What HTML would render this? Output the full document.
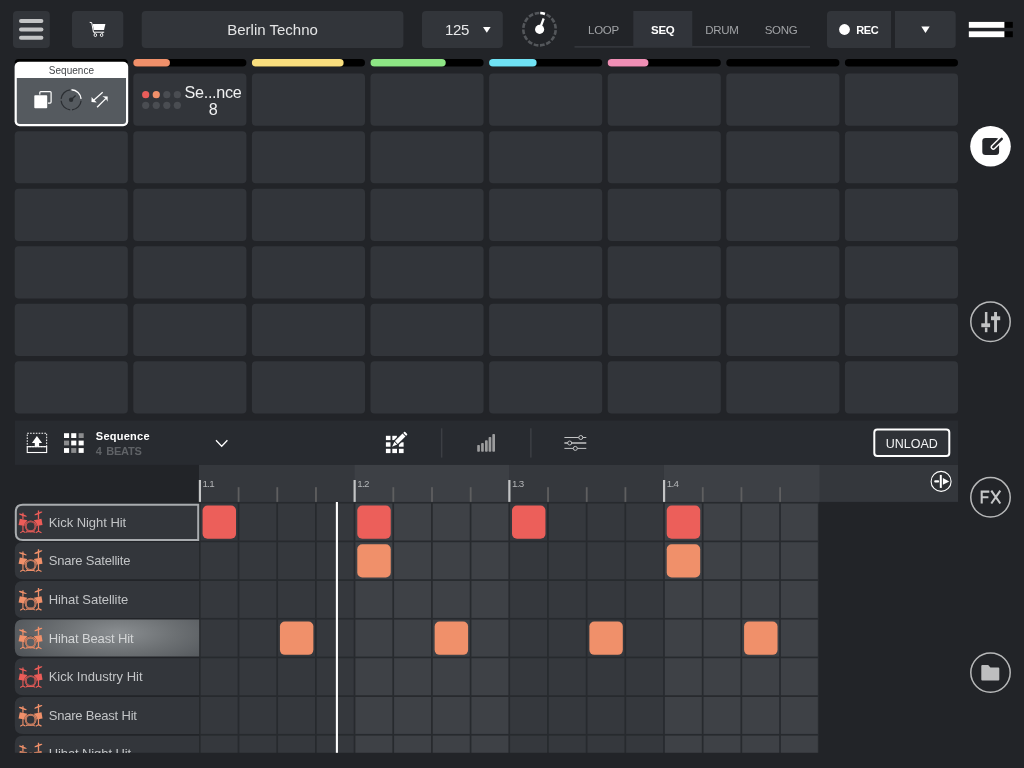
<!DOCTYPE html>
<html><head><meta charset="utf-8"><title>Berlin Techno</title>
<style>
*{box-sizing:border-box;margin:0;padding:0}
html,body{width:1024px;height:768px;overflow:hidden;background:#222428;font-family:"Liberation Sans",sans-serif}
body{position:relative}
#root{position:absolute;left:0;top:0;width:1024px;height:768px;will-change:transform}
#shapes{position:absolute;left:0;top:0}
.a{position:absolute;white-space:nowrap}
.tab{position:absolute;top:11px;height:36px;line-height:38.8px;font-size:11.5px;color:#a1a3a6;text-align:center;letter-spacing:-0.3px}
.rl{position:absolute;top:478.3px;font-size:9.8px;color:#b4b6b8;line-height:12px;letter-spacing:-0.7px}
#tn{position:absolute;left:0;top:502px;width:300px;height:250.8px;overflow:hidden}
.tn{position:absolute;left:48.7px;line-height:15px;font-size:13px;color:#c2c4c6;white-space:nowrap}
</style></head><body><div id="root">
<svg id="shapes" width="1024" height="768" viewBox="0 0 1024 768">
<rect x="13.00" y="11.00" width="36.80" height="37.00" rx="4" fill="#32353a"/>
<rect x="19.00" y="19.10" width="24.40" height="3.90" rx="1.95" fill="#c3c4c5"/>
<rect x="19.00" y="27.50" width="24.40" height="3.90" rx="1.95" fill="#c3c4c5"/>
<rect x="19.00" y="35.80" width="24.40" height="3.90" rx="1.95" fill="#c3c4c5"/>
<rect x="72.00" y="11.00" width="51.30" height="37.00" rx="4" fill="#32353a"/>
<g transform="translate(88 20)"><path d="M2.1 2.4 L3.7 2.6 L5.5 12.2 L15.8 12.2" fill="none" stroke="#fff" stroke-width="1" stroke-linecap="round" stroke-linejoin="round"/>
<path d="M4.7 4 L17.4 4 L16 10 L5.7 10 Z" fill="#fff"/>
<path d="M6.2 12.2 L6.8 13.8 M14.8 12.2 L14.2 13.8" stroke="#fff" stroke-width="0.8"/>
<ellipse cx="7.35" cy="15.1" rx="1.3" ry="1.45" fill="none" stroke="#fff" stroke-width="0.9"/>
<ellipse cx="13.6" cy="15.1" rx="1.3" ry="1.45" fill="none" stroke="#fff" stroke-width="0.9"/></g>
<rect x="141.70" y="11.00" width="261.70" height="37.00" rx="4" fill="#32353a"/>
<rect x="422.00" y="11.00" width="80.80" height="37.00" rx="4" fill="#32353a"/>
<g transform="translate(483 27)"><path d="M0 0 L7.6 0 L3.8 5.8 Z" fill="#fff"/></g>
<g transform="translate(519 9)"><circle cx="20.5" cy="20.2" r="16.2" fill="none" stroke="#54575b" stroke-width="2.6" stroke-dasharray="4.7 1.662" stroke-dashoffset="-0.83" transform="rotate(-90 20.5 20.2)"/>
<circle cx="20.5" cy="20.2" r="16.2" fill="none" stroke="#fff" stroke-width="2.6" stroke-dasharray="4.7 200" stroke-dashoffset="-0.83" transform="rotate(-90 20.5 20.2)"/>
<circle cx="20.6" cy="20.4" r="4.55" fill="#fff"/>
<path d="M20.6 20.4 L24.7 9.5" stroke="#fff" stroke-width="2.3"/></g>
<rect x="574.50" y="46.30" width="235.50" height="1.20" fill="#3b3e43"/>
<rect x="633.30" y="11.00" width="59.00" height="36.20" fill="#31343a"/>
<path d="M831 11 H891 V48 H831 Q827 48 827 44 V15 Q827 11 831 11 Z" fill="#32353a"/>
<circle cx="844.5" cy="29.5" r="5.4" fill="#fff"/>
<path d="M895 11 H951.7 Q955.7 11 955.7 15 V44 Q955.7 48 951.7 48 H895 Z" fill="#32353a"/>
<g transform="translate(921.3 26.5)"><path d="M0 0 L8.4 0 L4.2 6.4 Z" fill="#fff"/></g>
<rect x="968.80" y="21.90" width="44.00" height="5.90" fill="#000"/>
<rect x="968.80" y="21.90" width="35.60" height="5.90" fill="#fff"/>
<rect x="968.80" y="31.30" width="44.00" height="5.90" fill="#000"/>
<rect x="968.80" y="31.30" width="35.60" height="5.90" fill="#fff"/>
<rect x="14.70" y="58.90" width="113.10" height="7.50" rx="3.75" fill="#000"/>
<rect x="133.30" y="58.90" width="113.10" height="7.50" rx="3.75" fill="#000"/>
<rect x="133.30" y="58.90" width="36.60" height="7.50" rx="3.75" fill="#f0906a"/>
<rect x="251.90" y="58.90" width="113.10" height="7.50" rx="3.75" fill="#000"/>
<rect x="251.90" y="58.90" width="91.70" height="7.50" rx="3.75" fill="#fadf7e"/>
<rect x="370.50" y="58.90" width="113.10" height="7.50" rx="3.75" fill="#000"/>
<rect x="370.50" y="58.90" width="75.20" height="7.50" rx="3.75" fill="#8ee685"/>
<rect x="489.10" y="58.90" width="113.10" height="7.50" rx="3.75" fill="#000"/>
<rect x="489.10" y="58.90" width="47.50" height="7.50" rx="3.75" fill="#70e3f5"/>
<rect x="607.70" y="58.90" width="113.10" height="7.50" rx="3.75" fill="#000"/>
<rect x="607.70" y="58.90" width="40.70" height="7.50" rx="3.75" fill="#f08fb5"/>
<rect x="726.30" y="58.90" width="113.10" height="7.50" rx="3.75" fill="#000"/>
<rect x="844.90" y="58.90" width="113.10" height="7.50" rx="3.75" fill="#000"/>
<rect x="133.30" y="73.60" width="113.10" height="52.20" rx="4" fill="#32353a"/>
<rect x="251.90" y="73.60" width="113.10" height="52.20" rx="4" fill="#32353a"/>
<rect x="370.50" y="73.60" width="113.10" height="52.20" rx="4" fill="#32353a"/>
<rect x="489.10" y="73.60" width="113.10" height="52.20" rx="4" fill="#32353a"/>
<rect x="607.70" y="73.60" width="113.10" height="52.20" rx="4" fill="#32353a"/>
<rect x="726.30" y="73.60" width="113.10" height="52.20" rx="4" fill="#32353a"/>
<rect x="844.90" y="73.60" width="113.10" height="52.20" rx="4" fill="#32353a"/>
<rect x="14.70" y="131.15" width="113.10" height="52.20" rx="4" fill="#32353a"/>
<rect x="133.30" y="131.15" width="113.10" height="52.20" rx="4" fill="#32353a"/>
<rect x="251.90" y="131.15" width="113.10" height="52.20" rx="4" fill="#32353a"/>
<rect x="370.50" y="131.15" width="113.10" height="52.20" rx="4" fill="#32353a"/>
<rect x="489.10" y="131.15" width="113.10" height="52.20" rx="4" fill="#32353a"/>
<rect x="607.70" y="131.15" width="113.10" height="52.20" rx="4" fill="#32353a"/>
<rect x="726.30" y="131.15" width="113.10" height="52.20" rx="4" fill="#32353a"/>
<rect x="844.90" y="131.15" width="113.10" height="52.20" rx="4" fill="#32353a"/>
<rect x="14.70" y="188.70" width="113.10" height="52.20" rx="4" fill="#32353a"/>
<rect x="133.30" y="188.70" width="113.10" height="52.20" rx="4" fill="#32353a"/>
<rect x="251.90" y="188.70" width="113.10" height="52.20" rx="4" fill="#32353a"/>
<rect x="370.50" y="188.70" width="113.10" height="52.20" rx="4" fill="#32353a"/>
<rect x="489.10" y="188.70" width="113.10" height="52.20" rx="4" fill="#32353a"/>
<rect x="607.70" y="188.70" width="113.10" height="52.20" rx="4" fill="#32353a"/>
<rect x="726.30" y="188.70" width="113.10" height="52.20" rx="4" fill="#32353a"/>
<rect x="844.90" y="188.70" width="113.10" height="52.20" rx="4" fill="#32353a"/>
<rect x="14.70" y="246.25" width="113.10" height="52.20" rx="4" fill="#32353a"/>
<rect x="133.30" y="246.25" width="113.10" height="52.20" rx="4" fill="#32353a"/>
<rect x="251.90" y="246.25" width="113.10" height="52.20" rx="4" fill="#32353a"/>
<rect x="370.50" y="246.25" width="113.10" height="52.20" rx="4" fill="#32353a"/>
<rect x="489.10" y="246.25" width="113.10" height="52.20" rx="4" fill="#32353a"/>
<rect x="607.70" y="246.25" width="113.10" height="52.20" rx="4" fill="#32353a"/>
<rect x="726.30" y="246.25" width="113.10" height="52.20" rx="4" fill="#32353a"/>
<rect x="844.90" y="246.25" width="113.10" height="52.20" rx="4" fill="#32353a"/>
<rect x="14.70" y="303.80" width="113.10" height="52.20" rx="4" fill="#32353a"/>
<rect x="133.30" y="303.80" width="113.10" height="52.20" rx="4" fill="#32353a"/>
<rect x="251.90" y="303.80" width="113.10" height="52.20" rx="4" fill="#32353a"/>
<rect x="370.50" y="303.80" width="113.10" height="52.20" rx="4" fill="#32353a"/>
<rect x="489.10" y="303.80" width="113.10" height="52.20" rx="4" fill="#32353a"/>
<rect x="607.70" y="303.80" width="113.10" height="52.20" rx="4" fill="#32353a"/>
<rect x="726.30" y="303.80" width="113.10" height="52.20" rx="4" fill="#32353a"/>
<rect x="844.90" y="303.80" width="113.10" height="52.20" rx="4" fill="#32353a"/>
<rect x="14.70" y="361.35" width="113.10" height="52.20" rx="4" fill="#32353a"/>
<rect x="133.30" y="361.35" width="113.10" height="52.20" rx="4" fill="#32353a"/>
<rect x="251.90" y="361.35" width="113.10" height="52.20" rx="4" fill="#32353a"/>
<rect x="370.50" y="361.35" width="113.10" height="52.20" rx="4" fill="#32353a"/>
<rect x="489.10" y="361.35" width="113.10" height="52.20" rx="4" fill="#32353a"/>
<rect x="607.70" y="361.35" width="113.10" height="52.20" rx="4" fill="#32353a"/>
<rect x="726.30" y="361.35" width="113.10" height="52.20" rx="4" fill="#32353a"/>
<rect x="844.90" y="361.35" width="113.10" height="52.20" rx="4" fill="#32353a"/>
<rect x="14.60" y="61.70" width="113.60" height="64.60" rx="5" fill="#fff"/>
<path d="M16.8 78.1 H126 V121.1 Q126 124.1 123 124.1 H19.8 Q16.8 124.1 16.8 121.1 Z" fill="#555a5f"/>
<g transform="translate(30 86)"><rect x="9.8" y="5.6" width="11.3" height="11.5" rx="1" fill="none" stroke="#fff" stroke-width="1.2"/>
<rect x="3.6" y="8.6" width="14.3" height="14.2" fill="#555a5f"/>
<rect x="4.3" y="9.3" width="12.9" height="12.9" rx="0.8" fill="#fff"/>
<g fill="none" stroke-width="1.3">
<path d="M41.5 3.75 A10.05 10.05 0 0 1 51.1 12.9" stroke="#fff"/>
<path d="M51.1 14.7 A10.05 10.05 0 0 1 42 23.8" stroke="#2b2e32"/>
<path d="M40.2 23.8 A10.05 10.05 0 0 1 31.1 14.7" stroke="#2b2e32"/>
<path d="M31.1 12.9 A10.05 10.05 0 0 1 40.2 3.8" stroke="#2b2e32"/>
</g>
<circle cx="41.1" cy="13.8" r="2.2" fill="#2b2e32"/>
<path d="M41.1 13.8 L45.6 9.6" stroke="#2b2e32" stroke-width="1.3"/>
<path d="M72.7 6.3 L63.4 14.4" stroke="#fff" stroke-width="1.3" fill="none"/>
<path d="M61.5 16.1 L61.6 11 L63.3 13 L66.8 16.6 Z" fill="#fff"/>
<path d="M67.1 21.3 L76 12.4" stroke="#fff" stroke-width="1.3" fill="none"/>
<path d="M77.7 10.5 L72.4 10.2 L75.8 12.4 L77.6 15.8 Z" fill="#fff"/></g>
<circle cx="145.70" cy="94.7" r="3.6" fill="#e95d5a"/>
<circle cx="156.25" cy="94.7" r="3.6" fill="#f0906a"/>
<circle cx="166.80" cy="94.7" r="3.6" fill="#4a4d52"/>
<circle cx="177.35" cy="94.7" r="3.6" fill="#4a4d52"/>
<circle cx="145.70" cy="105.3" r="3.6" fill="#4a4d52"/>
<circle cx="156.25" cy="105.3" r="3.6" fill="#4a4d52"/>
<circle cx="166.80" cy="105.3" r="3.6" fill="#4a4d52"/>
<circle cx="177.35" cy="105.3" r="3.6" fill="#4a4d52"/>
<circle cx="990.5" cy="146.3" r="20.3" fill="#fff"/>
<g transform="translate(978 134)"><rect x="4.3" y="4.1" width="16.8" height="16.8" rx="3.2" fill="#25272b"/>
<path d="M15.3 13.2 L23.7 4.8" stroke="#fff" stroke-width="5.4" stroke-linecap="round"/>
<path d="M15.3 13.2 L23.7 4.8" stroke="#25272b" stroke-width="2.5" stroke-linecap="round"/></g>
<circle cx="990.5" cy="321.8" r="19.7" fill="none" stroke="#b7b8b9" stroke-width="1.5"/>
<circle cx="990.5" cy="497.3" r="19.7" fill="none" stroke="#b7b8b9" stroke-width="1.5"/>
<circle cx="990.5" cy="672.6" r="19.7" fill="none" stroke="#b7b8b9" stroke-width="1.5"/>
<g transform="translate(978 310)"><g fill="#c2c3c4"><rect x="6.9" y="2" width="2.5" height="13.6"/><rect x="6.9" y="17.6" width="2.5" height="4.6"/>
<rect x="3.3" y="13.3" width="8.8" height="3.9"/><rect x="16.1" y="2" width="2.9" height="20.2"/><rect x="13" y="6.3" width="9.2" height="3.9"/></g></g>
<g transform="translate(978 488)"><g fill="none" stroke="#c6c7c8" stroke-width="2.1">
<path d="M3.7 15.5 L3.7 2.6 M2.65 3.65 L11.3 3.65 M2.65 9.2 L10.4 9.2"/>
<path d="M13.3 2.6 L22.3 15.5 M22.3 2.6 L13.3 15.5"/></g></g>
<g transform="translate(980 663)"><path d="M1.3 3 Q1.3 2 2.3 2 L8.2 2 L10.4 4.6 L18.3 4.6 Q19.3 4.6 19.3 5.6 L19.3 16.5 Q19.3 17.5 18.3 17.5 L2.3 17.5 Q1.3 17.5 1.3 16.5 Z" fill="#bdbebf"/></g>
<rect x="15.00" y="420.60" width="943.00" height="44.30" fill="#282b30"/>
<g transform="translate(25 431)"><rect x="2.25" y="2.25" width="19.4" height="13.4" fill="none" stroke="#fff" stroke-width="1" stroke-dasharray="1.6 1.25"/>
<rect x="2.25" y="15.7" width="19.4" height="5.8" fill="none" stroke="#fff" stroke-width="1.1"/>
<path d="M11.9 4.9 L17.1 11.9 L14.1 11.9 L14.1 15.2 L9.8 15.2 L9.8 11.9 L6.9 11.9 Z" fill="#fff"/></g>
<rect x="64.00" y="433.20" width="5.10" height="4.80" fill="#fff"/>
<rect x="71.20" y="433.20" width="5.10" height="4.80" fill="#fff"/>
<rect x="78.60" y="433.20" width="5.10" height="4.80" fill="#8b8c8e"/>
<rect x="64.00" y="440.60" width="5.10" height="4.80" fill="#8b8c8e"/>
<rect x="71.20" y="440.60" width="5.10" height="4.80" fill="#fff"/>
<rect x="78.60" y="440.60" width="5.10" height="4.80" fill="#fff"/>
<rect x="64.00" y="448.10" width="5.10" height="4.80" fill="#fff"/>
<rect x="71.20" y="448.10" width="5.10" height="4.80" fill="#8b8c8e"/>
<rect x="78.60" y="448.10" width="5.10" height="4.80" fill="#fff"/>
<g transform="translate(214 438)"><path d="M2 2.2 L7.7 8.2 L13.4 2.2" fill="none" stroke="#fff" stroke-width="1.3"/></g>
<g transform="translate(384 431)"><g fill="#fff">
<rect x="1.9" y="4.8" width="4.6" height="4.3"/><rect x="8.3" y="4.8" width="4.6" height="4.3"/>
<rect x="1.9" y="11.3" width="4.6" height="4.4"/><rect x="14.9" y="11.3" width="4.7" height="4.4"/>
<rect x="1.9" y="17.8" width="4.6" height="4.3"/><rect x="8.3" y="17.8" width="4.7" height="4.3"/><rect x="14.9" y="17.8" width="4.7" height="4.3"/>
</g>
<g transform="translate(8.1 15.75) rotate(-44.5)">
<path d="M-0.6 0 L5.5 -2.5 L19.6 -2.5 L19.6 2.5 L5.5 2.5 Z" fill="#282b30" stroke="#282b30" stroke-width="1.7"/>
<path d="M0 0 L5.2 -2.05 L5.2 2.05 Z" fill="#fff"/>
<rect x="5.95" y="-2.05" width="10.7" height="4.1" fill="#fff"/>
<rect x="17.55" y="-2.2" width="2.1" height="4.4" rx="1" fill="#fff"/>
</g></g>
<rect x="440.90" y="428.30" width="1.50" height="29.30" fill="#3c3f44"/>
<rect x="530.10" y="428.30" width="1.50" height="29.30" fill="#3c3f44"/>
<rect x="477.20" y="445.00" width="2.70" height="6.70" rx="0.8" fill="#9b9c9d"/>
<rect x="481.10" y="443.10" width="2.70" height="8.60" rx="0.8" fill="#9b9c9d"/>
<rect x="485.00" y="440.30" width="2.70" height="11.40" rx="0.8" fill="#9b9c9d"/>
<rect x="488.60" y="436.90" width="2.70" height="14.80" rx="0.8" fill="#9b9c9d"/>
<rect x="492.30" y="434.10" width="2.70" height="17.60" rx="0.8" fill="#9b9c9d"/>
<g transform="translate(562 432)"><g stroke="#c3c4c5" fill="#282b30">
<path d="M2.4 5.5 L24.3 5.5" stroke-width="1"/><path d="M2.4 11 L24.3 11" stroke-width="1.5"/><path d="M2.4 16.4 L24.3 16.4" stroke-width="1"/>
<circle cx="18.8" cy="5.5" r="2" stroke-width="1"/><circle cx="7.7" cy="11" r="2" stroke-width="1"/><circle cx="13.3" cy="16.4" r="2" stroke-width="1"/>
</g></g>
<rect x="874.3" y="429.6" width="75" height="26.5" rx="3" fill="#2f3237" stroke="#fff" stroke-width="2"/>
<rect x="199.00" y="464.90" width="759.00" height="37.00" fill="#34373c"/>
<rect x="199.02" y="464.90" width="155.52" height="37.00" fill="#35383d"/>
<rect x="354.54" y="464.90" width="154.72" height="37.00" fill="#3d4045"/>
<rect x="509.26" y="464.90" width="154.72" height="37.00" fill="#35383d"/>
<rect x="663.98" y="464.90" width="155.52" height="37.00" fill="#3d4045"/>
<rect x="198.82" y="480.00" width="2.20" height="21.90" fill="#c3c4c5"/>
<rect x="237.70" y="487.20" width="1.80" height="14.70" fill="#5f5f60"/>
<rect x="276.38" y="487.20" width="1.80" height="14.70" fill="#5f5f60"/>
<rect x="315.06" y="487.20" width="1.80" height="14.70" fill="#5f5f60"/>
<rect x="353.54" y="480.00" width="2.20" height="21.90" fill="#c3c4c5"/>
<rect x="392.42" y="487.20" width="1.80" height="14.70" fill="#5f5f60"/>
<rect x="431.10" y="487.20" width="1.80" height="14.70" fill="#5f5f60"/>
<rect x="469.78" y="487.20" width="1.80" height="14.70" fill="#5f5f60"/>
<rect x="508.26" y="480.00" width="2.20" height="21.90" fill="#c3c4c5"/>
<rect x="547.14" y="487.20" width="1.80" height="14.70" fill="#5f5f60"/>
<rect x="585.82" y="487.20" width="1.80" height="14.70" fill="#5f5f60"/>
<rect x="624.50" y="487.20" width="1.80" height="14.70" fill="#5f5f60"/>
<rect x="662.98" y="480.00" width="2.20" height="21.90" fill="#c3c4c5"/>
<rect x="701.86" y="487.20" width="1.80" height="14.70" fill="#5f5f60"/>
<rect x="740.54" y="487.20" width="1.80" height="14.70" fill="#5f5f60"/>
<rect x="779.22" y="487.20" width="1.80" height="14.70" fill="#5f5f60"/>
<g transform="translate(929 469.4)"><circle cx="12.1" cy="12" r="10" fill="#2d3034" stroke="#fff" stroke-width="1.1"/>
<rect x="10.8" y="5.5" width="2" height="13" fill="#fff"/>
<rect x="5.2" y="10.9" width="4.9" height="2.3" rx="1" fill="#fff"/>
<path d="M13.9 8.7 L20.2 12.05 L13.9 15.4 Z" fill="#fff"/></g>
<defs><clipPath id="gc"><rect x="0" y="502" width="1024" height="250.8"/></clipPath><radialGradient id="hl" cx="0.56" cy="0.36" r="0.7" gradientTransform="translate(0 -0.25) scale(1 1.7)"><stop offset="0" stop-color="#8a8e91"/><stop offset="0.45" stop-color="#6c7073"/><stop offset="1" stop-color="#4b4f54"/></radialGradient></defs>
<g clip-path="url(#gc)">
<rect x="199.40" y="502.00" width="619.60" height="252.00" fill="#272a2e"/>
<path d="M22.8 503.55 H199.2 V540.53 H22.8 Q14.8 540.53 14.8 532.53 V511.55 Q14.8 503.55 22.8 503.55 Z" fill="#33363b"/>
<g transform="translate(18.8 509.95)"><g fill="#ec5c58" stroke="#ec5c58">
<ellipse cx="4.06" cy="5.15" rx="4.1" ry="0.85" transform="rotate(19 4.06 5.15)" stroke="none"/>
<path d="M4.14 2.9 L4.14 9.4" stroke-width="1.2" fill="none"/>
<ellipse cx="19.56" cy="3.48" rx="4.25" ry="0.85" transform="rotate(-21.5 19.56 3.48)" stroke="none"/>
<path d="M19.68 0.65 L19.68 9.4" stroke-width="1.3" fill="none"/>
<path d="M1.02 8.9 L8.52 10.32 L6.22 16.15 L-0.23 15.15 Z" stroke="none"/>
<path d="M22.68 8.9 L14.98 10.32 L17.48 16.15 L23.73 15.15 Z" stroke="none"/>
<circle cx="11.85" cy="16.36" r="6.3" fill="none" stroke="#2c2f33" stroke-opacity="0.8" stroke-width="0.5"/>
<circle cx="11.85" cy="16.36" r="4.9" fill="none" stroke-width="1.9"/>
<circle cx="11.85" cy="16.36" r="4.95" fill="none" stroke="#33363b" stroke-opacity="0.75" stroke-width="0.55"/>
<path d="M4.14 15.4 L4.14 21.3 L1.4 22.9 M4.14 21.3 L6.6 22.6" stroke-width="1.1" fill="none"/>
<path d="M19.68 15.4 L19.68 21.3 L16.9 22.9 M19.68 21.3 L22.7 22.8" stroke-width="1.2" fill="none"/>
<path d="M8.3 21 L7.2 22.9 M15.1 21 L15.6 22.9 M8.2 21.9 L15.3 21.9" stroke-width="1" fill="none"/>
</g></g>
<rect x="200.67" y="503.55" width="36.98" height="36.98" fill="#35383d"/>
<rect x="239.35" y="503.55" width="36.98" height="36.98" fill="#35383d"/>
<rect x="278.03" y="503.55" width="36.98" height="36.98" fill="#35383d"/>
<rect x="316.71" y="503.55" width="36.98" height="36.98" fill="#35383d"/>
<rect x="355.39" y="503.55" width="36.98" height="36.98" fill="#3e4146"/>
<rect x="394.07" y="503.55" width="36.98" height="36.98" fill="#3e4146"/>
<rect x="432.75" y="503.55" width="36.98" height="36.98" fill="#3e4146"/>
<rect x="471.43" y="503.55" width="36.98" height="36.98" fill="#3e4146"/>
<rect x="510.11" y="503.55" width="36.98" height="36.98" fill="#35383d"/>
<rect x="548.79" y="503.55" width="36.98" height="36.98" fill="#35383d"/>
<rect x="587.47" y="503.55" width="36.98" height="36.98" fill="#35383d"/>
<rect x="626.15" y="503.55" width="36.98" height="36.98" fill="#35383d"/>
<rect x="664.83" y="503.55" width="36.98" height="36.98" fill="#3e4146"/>
<rect x="703.51" y="503.55" width="36.98" height="36.98" fill="#3e4146"/>
<rect x="742.19" y="503.55" width="36.98" height="36.98" fill="#3e4146"/>
<rect x="780.87" y="503.55" width="36.98" height="36.98" fill="#3e4146"/>
<rect x="202.57" y="505.50" width="33.45" height="33.30" rx="5" fill="#ec5f5a"/>
<rect x="357.29" y="505.50" width="33.45" height="33.30" rx="5" fill="#ec5f5a"/>
<rect x="512.01" y="505.50" width="33.45" height="33.30" rx="5" fill="#ec5f5a"/>
<rect x="666.73" y="505.50" width="33.45" height="33.30" rx="5" fill="#ec5f5a"/>
<path d="M22.8 542.23 H199.2 V579.21 H22.8 Q14.8 579.21 14.8 571.21 V550.23 Q14.8 542.23 22.8 542.23 Z" fill="#33363b"/>
<g transform="translate(18.8 548.63)"><g fill="#f0906a" stroke="#f0906a">
<ellipse cx="4.06" cy="5.15" rx="4.1" ry="0.85" transform="rotate(19 4.06 5.15)" stroke="none"/>
<path d="M4.14 2.9 L4.14 9.4" stroke-width="1.2" fill="none"/>
<ellipse cx="19.56" cy="3.48" rx="4.25" ry="0.85" transform="rotate(-21.5 19.56 3.48)" stroke="none"/>
<path d="M19.68 0.65 L19.68 9.4" stroke-width="1.3" fill="none"/>
<path d="M1.02 8.9 L8.52 10.32 L6.22 16.15 L-0.23 15.15 Z" stroke="none"/>
<path d="M22.68 8.9 L14.98 10.32 L17.48 16.15 L23.73 15.15 Z" stroke="none"/>
<circle cx="11.85" cy="16.36" r="6.3" fill="none" stroke="#2c2f33" stroke-opacity="0.8" stroke-width="0.5"/>
<circle cx="11.85" cy="16.36" r="4.9" fill="none" stroke-width="1.9"/>
<circle cx="11.85" cy="16.36" r="4.95" fill="none" stroke="#33363b" stroke-opacity="0.75" stroke-width="0.55"/>
<path d="M4.14 15.4 L4.14 21.3 L1.4 22.9 M4.14 21.3 L6.6 22.6" stroke-width="1.1" fill="none"/>
<path d="M19.68 15.4 L19.68 21.3 L16.9 22.9 M19.68 21.3 L22.7 22.8" stroke-width="1.2" fill="none"/>
<path d="M8.3 21 L7.2 22.9 M15.1 21 L15.6 22.9 M8.2 21.9 L15.3 21.9" stroke-width="1" fill="none"/>
</g></g>
<rect x="200.67" y="542.23" width="36.98" height="36.98" fill="#35383d"/>
<rect x="239.35" y="542.23" width="36.98" height="36.98" fill="#35383d"/>
<rect x="278.03" y="542.23" width="36.98" height="36.98" fill="#35383d"/>
<rect x="316.71" y="542.23" width="36.98" height="36.98" fill="#35383d"/>
<rect x="355.39" y="542.23" width="36.98" height="36.98" fill="#3e4146"/>
<rect x="394.07" y="542.23" width="36.98" height="36.98" fill="#3e4146"/>
<rect x="432.75" y="542.23" width="36.98" height="36.98" fill="#3e4146"/>
<rect x="471.43" y="542.23" width="36.98" height="36.98" fill="#3e4146"/>
<rect x="510.11" y="542.23" width="36.98" height="36.98" fill="#35383d"/>
<rect x="548.79" y="542.23" width="36.98" height="36.98" fill="#35383d"/>
<rect x="587.47" y="542.23" width="36.98" height="36.98" fill="#35383d"/>
<rect x="626.15" y="542.23" width="36.98" height="36.98" fill="#35383d"/>
<rect x="664.83" y="542.23" width="36.98" height="36.98" fill="#3e4146"/>
<rect x="703.51" y="542.23" width="36.98" height="36.98" fill="#3e4146"/>
<rect x="742.19" y="542.23" width="36.98" height="36.98" fill="#3e4146"/>
<rect x="780.87" y="542.23" width="36.98" height="36.98" fill="#3e4146"/>
<rect x="357.29" y="544.18" width="33.45" height="33.30" rx="5" fill="#f0906a"/>
<rect x="666.73" y="544.18" width="33.45" height="33.30" rx="5" fill="#f0906a"/>
<path d="M22.8 580.91 H199.2 V617.89 H22.8 Q14.8 617.89 14.8 609.89 V588.91 Q14.8 580.91 22.8 580.91 Z" fill="#33363b"/>
<g transform="translate(18.8 587.31)"><g fill="#f0906a" stroke="#f0906a">
<ellipse cx="4.06" cy="5.15" rx="4.1" ry="0.85" transform="rotate(19 4.06 5.15)" stroke="none"/>
<path d="M4.14 2.9 L4.14 9.4" stroke-width="1.2" fill="none"/>
<ellipse cx="19.56" cy="3.48" rx="4.25" ry="0.85" transform="rotate(-21.5 19.56 3.48)" stroke="none"/>
<path d="M19.68 0.65 L19.68 9.4" stroke-width="1.3" fill="none"/>
<path d="M1.02 8.9 L8.52 10.32 L6.22 16.15 L-0.23 15.15 Z" stroke="none"/>
<path d="M22.68 8.9 L14.98 10.32 L17.48 16.15 L23.73 15.15 Z" stroke="none"/>
<circle cx="11.85" cy="16.36" r="6.3" fill="none" stroke="#2c2f33" stroke-opacity="0.8" stroke-width="0.5"/>
<circle cx="11.85" cy="16.36" r="4.9" fill="none" stroke-width="1.9"/>
<circle cx="11.85" cy="16.36" r="4.95" fill="none" stroke="#33363b" stroke-opacity="0.75" stroke-width="0.55"/>
<path d="M4.14 15.4 L4.14 21.3 L1.4 22.9 M4.14 21.3 L6.6 22.6" stroke-width="1.1" fill="none"/>
<path d="M19.68 15.4 L19.68 21.3 L16.9 22.9 M19.68 21.3 L22.7 22.8" stroke-width="1.2" fill="none"/>
<path d="M8.3 21 L7.2 22.9 M15.1 21 L15.6 22.9 M8.2 21.9 L15.3 21.9" stroke-width="1" fill="none"/>
</g></g>
<rect x="200.67" y="580.91" width="36.98" height="36.98" fill="#35383d"/>
<rect x="239.35" y="580.91" width="36.98" height="36.98" fill="#35383d"/>
<rect x="278.03" y="580.91" width="36.98" height="36.98" fill="#35383d"/>
<rect x="316.71" y="580.91" width="36.98" height="36.98" fill="#35383d"/>
<rect x="355.39" y="580.91" width="36.98" height="36.98" fill="#3e4146"/>
<rect x="394.07" y="580.91" width="36.98" height="36.98" fill="#3e4146"/>
<rect x="432.75" y="580.91" width="36.98" height="36.98" fill="#3e4146"/>
<rect x="471.43" y="580.91" width="36.98" height="36.98" fill="#3e4146"/>
<rect x="510.11" y="580.91" width="36.98" height="36.98" fill="#35383d"/>
<rect x="548.79" y="580.91" width="36.98" height="36.98" fill="#35383d"/>
<rect x="587.47" y="580.91" width="36.98" height="36.98" fill="#35383d"/>
<rect x="626.15" y="580.91" width="36.98" height="36.98" fill="#35383d"/>
<rect x="664.83" y="580.91" width="36.98" height="36.98" fill="#3e4146"/>
<rect x="703.51" y="580.91" width="36.98" height="36.98" fill="#3e4146"/>
<rect x="742.19" y="580.91" width="36.98" height="36.98" fill="#3e4146"/>
<rect x="780.87" y="580.91" width="36.98" height="36.98" fill="#3e4146"/>
<path d="M22.8 619.59 H199.2 V656.57 H22.8 Q14.8 656.57 14.8 648.57 V627.59 Q14.8 619.59 22.8 619.59 Z" fill="url(#hl)"/>
<g transform="translate(18.8 625.99)"><g fill="#f0906a" stroke="#f0906a">
<ellipse cx="4.06" cy="5.15" rx="4.1" ry="0.85" transform="rotate(19 4.06 5.15)" stroke="none"/>
<path d="M4.14 2.9 L4.14 9.4" stroke-width="1.2" fill="none"/>
<ellipse cx="19.56" cy="3.48" rx="4.25" ry="0.85" transform="rotate(-21.5 19.56 3.48)" stroke="none"/>
<path d="M19.68 0.65 L19.68 9.4" stroke-width="1.3" fill="none"/>
<path d="M1.02 8.9 L8.52 10.32 L6.22 16.15 L-0.23 15.15 Z" stroke="none"/>
<path d="M22.68 8.9 L14.98 10.32 L17.48 16.15 L23.73 15.15 Z" stroke="none"/>
<circle cx="11.85" cy="16.36" r="6.3" fill="none" stroke="#2c2f33" stroke-opacity="0.8" stroke-width="0.5"/>
<circle cx="11.85" cy="16.36" r="4.9" fill="none" stroke-width="1.9"/>
<circle cx="11.85" cy="16.36" r="4.95" fill="none" stroke="#33363b" stroke-opacity="0.75" stroke-width="0.55"/>
<path d="M4.14 15.4 L4.14 21.3 L1.4 22.9 M4.14 21.3 L6.6 22.6" stroke-width="1.1" fill="none"/>
<path d="M19.68 15.4 L19.68 21.3 L16.9 22.9 M19.68 21.3 L22.7 22.8" stroke-width="1.2" fill="none"/>
<path d="M8.3 21 L7.2 22.9 M15.1 21 L15.6 22.9 M8.2 21.9 L15.3 21.9" stroke-width="1" fill="none"/>
</g></g>
<rect x="200.67" y="619.59" width="36.98" height="36.98" fill="#35383d"/>
<rect x="239.35" y="619.59" width="36.98" height="36.98" fill="#35383d"/>
<rect x="278.03" y="619.59" width="36.98" height="36.98" fill="#35383d"/>
<rect x="316.71" y="619.59" width="36.98" height="36.98" fill="#35383d"/>
<rect x="355.39" y="619.59" width="36.98" height="36.98" fill="#3e4146"/>
<rect x="394.07" y="619.59" width="36.98" height="36.98" fill="#3e4146"/>
<rect x="432.75" y="619.59" width="36.98" height="36.98" fill="#3e4146"/>
<rect x="471.43" y="619.59" width="36.98" height="36.98" fill="#3e4146"/>
<rect x="510.11" y="619.59" width="36.98" height="36.98" fill="#35383d"/>
<rect x="548.79" y="619.59" width="36.98" height="36.98" fill="#35383d"/>
<rect x="587.47" y="619.59" width="36.98" height="36.98" fill="#35383d"/>
<rect x="626.15" y="619.59" width="36.98" height="36.98" fill="#35383d"/>
<rect x="664.83" y="619.59" width="36.98" height="36.98" fill="#3e4146"/>
<rect x="703.51" y="619.59" width="36.98" height="36.98" fill="#3e4146"/>
<rect x="742.19" y="619.59" width="36.98" height="36.98" fill="#3e4146"/>
<rect x="780.87" y="619.59" width="36.98" height="36.98" fill="#3e4146"/>
<rect x="279.93" y="621.54" width="33.45" height="33.30" rx="5" fill="#f0906a"/>
<rect x="434.65" y="621.54" width="33.45" height="33.30" rx="5" fill="#f0906a"/>
<rect x="589.37" y="621.54" width="33.45" height="33.30" rx="5" fill="#f0906a"/>
<rect x="744.09" y="621.54" width="33.45" height="33.30" rx="5" fill="#f0906a"/>
<path d="M22.8 658.27 H199.2 V695.25 H22.8 Q14.8 695.25 14.8 687.25 V666.27 Q14.8 658.27 22.8 658.27 Z" fill="#33363b"/>
<g transform="translate(18.8 664.67)"><g fill="#ec5c58" stroke="#ec5c58">
<ellipse cx="4.06" cy="5.15" rx="4.1" ry="0.85" transform="rotate(19 4.06 5.15)" stroke="none"/>
<path d="M4.14 2.9 L4.14 9.4" stroke-width="1.2" fill="none"/>
<ellipse cx="19.56" cy="3.48" rx="4.25" ry="0.85" transform="rotate(-21.5 19.56 3.48)" stroke="none"/>
<path d="M19.68 0.65 L19.68 9.4" stroke-width="1.3" fill="none"/>
<path d="M1.02 8.9 L8.52 10.32 L6.22 16.15 L-0.23 15.15 Z" stroke="none"/>
<path d="M22.68 8.9 L14.98 10.32 L17.48 16.15 L23.73 15.15 Z" stroke="none"/>
<circle cx="11.85" cy="16.36" r="6.3" fill="none" stroke="#2c2f33" stroke-opacity="0.8" stroke-width="0.5"/>
<circle cx="11.85" cy="16.36" r="4.9" fill="none" stroke-width="1.9"/>
<circle cx="11.85" cy="16.36" r="4.95" fill="none" stroke="#33363b" stroke-opacity="0.75" stroke-width="0.55"/>
<path d="M4.14 15.4 L4.14 21.3 L1.4 22.9 M4.14 21.3 L6.6 22.6" stroke-width="1.1" fill="none"/>
<path d="M19.68 15.4 L19.68 21.3 L16.9 22.9 M19.68 21.3 L22.7 22.8" stroke-width="1.2" fill="none"/>
<path d="M8.3 21 L7.2 22.9 M15.1 21 L15.6 22.9 M8.2 21.9 L15.3 21.9" stroke-width="1" fill="none"/>
</g></g>
<rect x="200.67" y="658.27" width="36.98" height="36.98" fill="#35383d"/>
<rect x="239.35" y="658.27" width="36.98" height="36.98" fill="#35383d"/>
<rect x="278.03" y="658.27" width="36.98" height="36.98" fill="#35383d"/>
<rect x="316.71" y="658.27" width="36.98" height="36.98" fill="#35383d"/>
<rect x="355.39" y="658.27" width="36.98" height="36.98" fill="#3e4146"/>
<rect x="394.07" y="658.27" width="36.98" height="36.98" fill="#3e4146"/>
<rect x="432.75" y="658.27" width="36.98" height="36.98" fill="#3e4146"/>
<rect x="471.43" y="658.27" width="36.98" height="36.98" fill="#3e4146"/>
<rect x="510.11" y="658.27" width="36.98" height="36.98" fill="#35383d"/>
<rect x="548.79" y="658.27" width="36.98" height="36.98" fill="#35383d"/>
<rect x="587.47" y="658.27" width="36.98" height="36.98" fill="#35383d"/>
<rect x="626.15" y="658.27" width="36.98" height="36.98" fill="#35383d"/>
<rect x="664.83" y="658.27" width="36.98" height="36.98" fill="#3e4146"/>
<rect x="703.51" y="658.27" width="36.98" height="36.98" fill="#3e4146"/>
<rect x="742.19" y="658.27" width="36.98" height="36.98" fill="#3e4146"/>
<rect x="780.87" y="658.27" width="36.98" height="36.98" fill="#3e4146"/>
<path d="M22.8 696.95 H199.2 V733.93 H22.8 Q14.8 733.93 14.8 725.93 V704.95 Q14.8 696.95 22.8 696.95 Z" fill="#33363b"/>
<g transform="translate(18.8 703.35)"><g fill="#f0906a" stroke="#f0906a">
<ellipse cx="4.06" cy="5.15" rx="4.1" ry="0.85" transform="rotate(19 4.06 5.15)" stroke="none"/>
<path d="M4.14 2.9 L4.14 9.4" stroke-width="1.2" fill="none"/>
<ellipse cx="19.56" cy="3.48" rx="4.25" ry="0.85" transform="rotate(-21.5 19.56 3.48)" stroke="none"/>
<path d="M19.68 0.65 L19.68 9.4" stroke-width="1.3" fill="none"/>
<path d="M1.02 8.9 L8.52 10.32 L6.22 16.15 L-0.23 15.15 Z" stroke="none"/>
<path d="M22.68 8.9 L14.98 10.32 L17.48 16.15 L23.73 15.15 Z" stroke="none"/>
<circle cx="11.85" cy="16.36" r="6.3" fill="none" stroke="#2c2f33" stroke-opacity="0.8" stroke-width="0.5"/>
<circle cx="11.85" cy="16.36" r="4.9" fill="none" stroke-width="1.9"/>
<circle cx="11.85" cy="16.36" r="4.95" fill="none" stroke="#33363b" stroke-opacity="0.75" stroke-width="0.55"/>
<path d="M4.14 15.4 L4.14 21.3 L1.4 22.9 M4.14 21.3 L6.6 22.6" stroke-width="1.1" fill="none"/>
<path d="M19.68 15.4 L19.68 21.3 L16.9 22.9 M19.68 21.3 L22.7 22.8" stroke-width="1.2" fill="none"/>
<path d="M8.3 21 L7.2 22.9 M15.1 21 L15.6 22.9 M8.2 21.9 L15.3 21.9" stroke-width="1" fill="none"/>
</g></g>
<rect x="200.67" y="696.95" width="36.98" height="36.98" fill="#35383d"/>
<rect x="239.35" y="696.95" width="36.98" height="36.98" fill="#35383d"/>
<rect x="278.03" y="696.95" width="36.98" height="36.98" fill="#35383d"/>
<rect x="316.71" y="696.95" width="36.98" height="36.98" fill="#35383d"/>
<rect x="355.39" y="696.95" width="36.98" height="36.98" fill="#3e4146"/>
<rect x="394.07" y="696.95" width="36.98" height="36.98" fill="#3e4146"/>
<rect x="432.75" y="696.95" width="36.98" height="36.98" fill="#3e4146"/>
<rect x="471.43" y="696.95" width="36.98" height="36.98" fill="#3e4146"/>
<rect x="510.11" y="696.95" width="36.98" height="36.98" fill="#35383d"/>
<rect x="548.79" y="696.95" width="36.98" height="36.98" fill="#35383d"/>
<rect x="587.47" y="696.95" width="36.98" height="36.98" fill="#35383d"/>
<rect x="626.15" y="696.95" width="36.98" height="36.98" fill="#35383d"/>
<rect x="664.83" y="696.95" width="36.98" height="36.98" fill="#3e4146"/>
<rect x="703.51" y="696.95" width="36.98" height="36.98" fill="#3e4146"/>
<rect x="742.19" y="696.95" width="36.98" height="36.98" fill="#3e4146"/>
<rect x="780.87" y="696.95" width="36.98" height="36.98" fill="#3e4146"/>
<path d="M22.8 735.63 H199.2 V772.61 H22.8 Q14.8 772.61 14.8 764.61 V743.63 Q14.8 735.63 22.8 735.63 Z" fill="#33363b"/>
<g transform="translate(18.8 742.03)"><g fill="#f0906a" stroke="#f0906a">
<ellipse cx="4.06" cy="5.15" rx="4.1" ry="0.85" transform="rotate(19 4.06 5.15)" stroke="none"/>
<path d="M4.14 2.9 L4.14 9.4" stroke-width="1.2" fill="none"/>
<ellipse cx="19.56" cy="3.48" rx="4.25" ry="0.85" transform="rotate(-21.5 19.56 3.48)" stroke="none"/>
<path d="M19.68 0.65 L19.68 9.4" stroke-width="1.3" fill="none"/>
<path d="M1.02 8.9 L8.52 10.32 L6.22 16.15 L-0.23 15.15 Z" stroke="none"/>
<path d="M22.68 8.9 L14.98 10.32 L17.48 16.15 L23.73 15.15 Z" stroke="none"/>
<circle cx="11.85" cy="16.36" r="6.3" fill="none" stroke="#2c2f33" stroke-opacity="0.8" stroke-width="0.5"/>
<circle cx="11.85" cy="16.36" r="4.9" fill="none" stroke-width="1.9"/>
<circle cx="11.85" cy="16.36" r="4.95" fill="none" stroke="#33363b" stroke-opacity="0.75" stroke-width="0.55"/>
<path d="M4.14 15.4 L4.14 21.3 L1.4 22.9 M4.14 21.3 L6.6 22.6" stroke-width="1.1" fill="none"/>
<path d="M19.68 15.4 L19.68 21.3 L16.9 22.9 M19.68 21.3 L22.7 22.8" stroke-width="1.2" fill="none"/>
<path d="M8.3 21 L7.2 22.9 M15.1 21 L15.6 22.9 M8.2 21.9 L15.3 21.9" stroke-width="1" fill="none"/>
</g></g>
<rect x="200.67" y="735.63" width="36.98" height="36.98" fill="#35383d"/>
<rect x="239.35" y="735.63" width="36.98" height="36.98" fill="#35383d"/>
<rect x="278.03" y="735.63" width="36.98" height="36.98" fill="#35383d"/>
<rect x="316.71" y="735.63" width="36.98" height="36.98" fill="#35383d"/>
<rect x="355.39" y="735.63" width="36.98" height="36.98" fill="#3e4146"/>
<rect x="394.07" y="735.63" width="36.98" height="36.98" fill="#3e4146"/>
<rect x="432.75" y="735.63" width="36.98" height="36.98" fill="#3e4146"/>
<rect x="471.43" y="735.63" width="36.98" height="36.98" fill="#3e4146"/>
<rect x="510.11" y="735.63" width="36.98" height="36.98" fill="#35383d"/>
<rect x="548.79" y="735.63" width="36.98" height="36.98" fill="#35383d"/>
<rect x="587.47" y="735.63" width="36.98" height="36.98" fill="#35383d"/>
<rect x="626.15" y="735.63" width="36.98" height="36.98" fill="#35383d"/>
<rect x="664.83" y="735.63" width="36.98" height="36.98" fill="#3e4146"/>
<rect x="703.51" y="735.63" width="36.98" height="36.98" fill="#3e4146"/>
<rect x="742.19" y="735.63" width="36.98" height="36.98" fill="#3e4146"/>
<rect x="780.87" y="735.63" width="36.98" height="36.98" fill="#3e4146"/>
<path d="M22.8 504.70 H198.2 V539.90 H22.8 Q15.8 539.90 15.8 532.90 V511.70 Q15.8 504.70 22.8 504.70 Z" fill="none" stroke="#a9acaf" stroke-width="2"/>
</g>
<rect x="335.85" y="502.00" width="2.10" height="250.80" fill="#fff"/>
</svg>
<div class="a" style="left:141.7px;top:11px;width:261.7px;text-align:center;line-height:37px;font-size:15px;color:#e4e5e6">Berlin Techno</div>
<div class="a" style="left:445px;top:11px;line-height:37px;font-size:15px;color:#e8e9ea;letter-spacing:-0.35px">125</div>
<div class="tab" style="left:574px;width:59px">LOOP</div>
<div class="tab" style="left:633.3px;width:59px;color:#fff;font-weight:bold">SEQ</div>
<div class="tab" style="left:692.5px;width:59px">DRUM</div>
<div class="tab" style="left:751.5px;width:59px">SONG</div>
<div class="a" style="left:856.2px;top:11px;line-height:38.4px;font-size:11px;font-weight:bold;color:#fff;letter-spacing:-0.3px">REC</div>
<div class="a" style="left:14.6px;top:63px;width:113.6px;text-align:center;font-size:10px;line-height:15px;color:#44474b;letter-spacing:0.02px">Sequence</div>
<div class="a" style="left:183px;top:84px;width:60px;text-align:center;font-size:16.2px;line-height:17.2px;color:#f0f1f2;letter-spacing:-0.3px">Se...nce<br>8</div>
<div class="a" style="left:95.8px;top:429.6px;font-size:11px;font-weight:bold;line-height:13px;color:#fff;letter-spacing:0.26px">Sequence</div>
<div class="a" style="left:95.8px;top:444.6px;font-size:11px;font-weight:bold;line-height:13px;color:#5f6266;letter-spacing:-0.2px;word-spacing:1.6px">4 BEATS</div>
<div class="a" style="left:873.3px;top:428.6px;width:77px;text-align:center;font-size:12.5px;line-height:31.6px;color:#f2f3f4">UNLOAD</div>
<div class="rl" style="left:202.5px">1.1</div>
<div class="rl" style="left:357.2px">1.2</div>
<div class="rl" style="left:512.0px">1.3</div>
<div class="rl" style="left:666.7px">1.4</div>
<div id="tn">
<div class="tn" style="top:13px;letter-spacing:-0.04px">Kick Night Hit</div>
<div class="tn" style="top:51px;letter-spacing:-0.2px">Snare Satellite</div>
<div class="tn" style="top:90px;letter-spacing:-0.05px">Hihat Satellite</div>
<div class="tn" style="top:129px;letter-spacing:-0.12px;color:#d3d5d6">Hihat Beast Hit</div>
<div class="tn" style="top:167px;letter-spacing:0px">Kick Industry Hit</div>
<div class="tn" style="top:206px;letter-spacing:-0.2px">Snare Beast Hit</div>
<div class="tn" style="top:244px;letter-spacing:-0.1px">Hihat Night Hit</div>
</div>
</div></body></html>
